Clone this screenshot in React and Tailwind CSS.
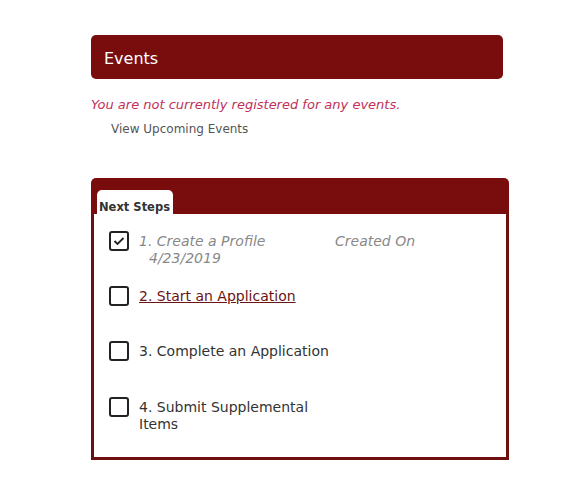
export default function App() {
  const font = { fontFamily: '"DejaVu Sans", Verdana, sans-serif' };
  const Box = ({ checked }) => (
    <div className="w-[20px] h-[20px] shrink-0 rounded-[3px] border-2 border-[#222] bg-white flex items-center justify-center">
      {checked && (
        <svg width="12" height="10" viewBox="0 0 12 10" fill="none">
          <path d="M1.5 5 L4.5 8 L10.5 2" stroke="#222" strokeWidth="1.8" />
        </svg>
      )}
    </div>
  );
  return (
    <div className="w-[580px] h-[498px] bg-white pt-[35px] pl-[91px]" style={font}>
      <div className="w-[412px] h-[44px] rounded-[5px] bg-[#790c0c] text-white text-[16px] pl-[13px] pt-[3px] flex items-center">
        Events
      </div>
      <div className="mt-[18px] text-[13px] leading-[16px] italic text-[#c0305a]">
        You are not currently registered for any events.
      </div>
      <div className="mt-[9px] pl-[20px] text-[12px] leading-[15px] text-[#555]">
        View Upcoming Events
      </div>
      <div className="mt-[41px] w-[418px]">
        <div className="h-[36px] bg-[#790c0c] rounded-t-[5px] flex items-end pl-[6px]">
          <div className="w-[76px] h-[24px] bg-white rounded-t-[5px] flex items-end pl-[2px] pb-[1px]">
            <span className="whitespace-nowrap text-[11.5px] leading-[12px] font-bold text-[#333]">Next Steps</span>
          </div>
        </div>
        <div className="h-[246px] border-x-[3px] border-b-[3px] border-[#6e1010] bg-white pt-[17px] pl-[15px]">
          <div className="flex items-start gap-[10px] h-[55px]">
            <Box checked />
            <div className="w-[186px] text-[14px] leading-[17px] italic text-[#888] pt-[2px]">
              1. Create a Profile
              <div className="pl-[10px]">4/23/2019</div>
            </div>
            <div className="text-[14px] leading-[17px] italic text-[#888] pt-[2px]">Created On</div>
          </div>
          <div className="flex items-start gap-[10px] h-[55px]">
            <Box />
            <a className="text-[14px] leading-[17px] text-[#6b1414] underline pt-[2px]">2. Start an Application</a>
          </div>
          <div className="flex items-start gap-[10px] h-[56px]">
            <Box />
            <div className="text-[14px] leading-[17px] text-[#333] pt-[2px]">3. Complete an Application</div>
          </div>
          <div className="flex items-start gap-[10px]">
            <Box />
            <div className="w-[186px] text-[14px] leading-[17px] text-[#333] pt-[2px]">4. Submit Supplemental Items</div>
          </div>
        </div>
      </div>
    </div>
  );
}
